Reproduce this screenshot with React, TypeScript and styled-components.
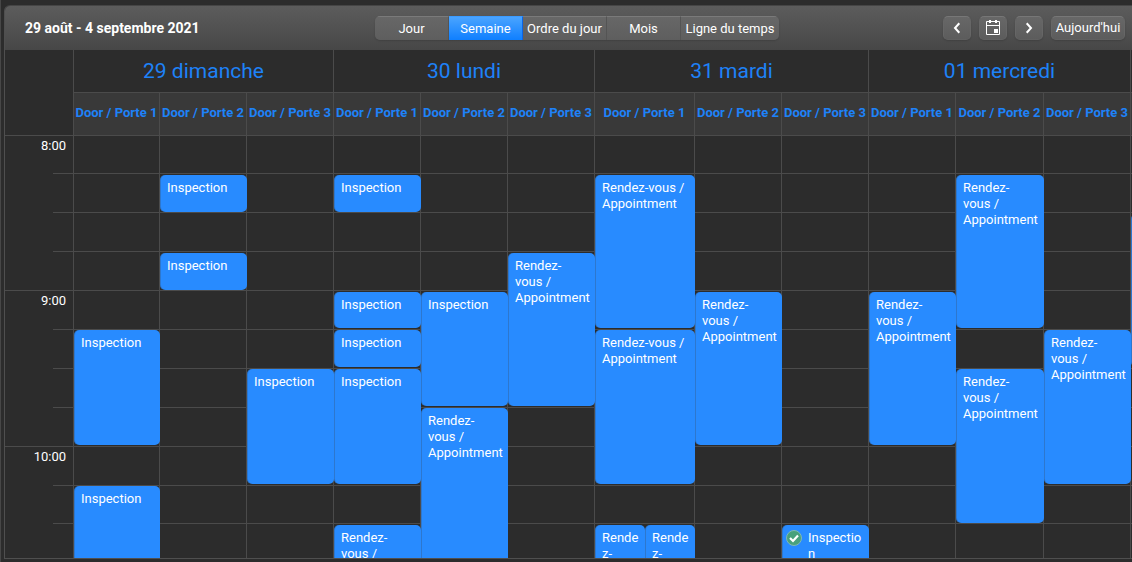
import React from "react";
import styled, { createGlobalStyle } from "styled-components";

const GlobalStyle = createGlobalStyle`
  * { box-sizing: border-box; }
  html, body { margin: 0; background: #2c2c2c; }
  body {
    font-family: Roboto, "Liberation Sans", sans-serif;
    font-size: 13px;
    color: #fff;
    overflow: hidden;
  }
  button { font: inherit; color: inherit; }
`;

const line = "#4b4b4b";
const accent = "#1e82f8";

/* Time gutter, twelve door columns, and the first pixels of the next day. */
const columns =
  "68px 86fr repeat(5, 87fr) 100fr repeat(3, 87fr) 88fr 87fr 2px";

const Page = styled.main`
  border-left: 1px solid #474747;
  padding: 5px 0 3px 3px;
  overflow: hidden;
`;

const Scheduler = styled.section`
  border: 1px solid #4f4f4f;
  border-right: 0;
  border-top-color: #454545;
  border-top-left-radius: 6px;
  overflow: hidden;
`;

const Toolbar = styled.header`
  display: grid;
  grid-template-columns: 350fr auto 346fr;
  align-items: center;
  height: 44px;
  padding: 0 7px 0 20px;
  background: linear-gradient(#5c5c5c, #474747);
`;

const Title = styled.h1`
  margin: 0;
  font-size: 14px;
  line-height: 20px;
  font-weight: 700;
  white-space: nowrap;
`;

const Views = styled.div`
  display: flex;
  height: 24px;
  border-radius: 5px;
  overflow: hidden;
  box-shadow: 0 1px 2px rgba(0, 0, 0, 0.15);
`;

const ViewButton = styled.button<{ $active?: boolean; $width: number }>`
  width: ${(p) => p.$width}px;
  padding: 0;
  border: 0;
  border-top: 1px solid ${(p) => (p.$active ? "#3b9bff" : "#7a7a7a")};
  border-right: 1px solid ${(p) => (p.$active ? "#0a66e8" : "#545454")};
  background: ${(p) =>
    p.$active
      ? "linear-gradient(#4aa4ff, #0f7fff)"
      : "linear-gradient(#676767, #5e5e5e)"};
  line-height: 22px;
  white-space: nowrap;
  &:last-child { border-right: 0; }
`;

const Nav = styled.nav`
  display: flex;
  justify-content: flex-end;
  gap: 8px;
`;

const NavButton = styled.button<{ $width?: number }>`
  display: flex;
  align-items: center;
  justify-content: center;
  width: ${(p) => p.$width ?? 28}px;
  height: 24px;
  padding: 0;
  border: 1px solid #666;
  border-top-color: #777;
  border-bottom-color: #606060;
  border-radius: 5px;
  background: linear-gradient(#676767, #5c5c5c);
  box-shadow: 0 1px 2px rgba(0, 0, 0, 0.15);
  line-height: 22px;
  white-space: nowrap;
`;

const Header = styled.div`
  display: grid;
  grid-template-columns: ${columns};
  grid-template-rows: 42px 43px;
`;

const Corner = styled.div`
  grid-row: 1 / 3;
`;

const DayName = styled.h2<{ $span: number }>`
  grid-column: span ${(p) => p.$span};
  margin: 0;
  border-left: 1px solid ${line};
  color: ${accent};
  font-size: 21px;
  font-weight: 400;
  line-height: 42px;
  text-align: center;
`;

const DoorName = styled.div`
  border-left: 1px solid ${line};
  border-top: 1px solid ${line};
  background: #393939;
  color: ${accent};
  font-weight: 700;
  line-height: 40px;
  text-align: center;
  white-space: nowrap;
  overflow: hidden;
`;

const Body = styled.div`
  display: grid;
  grid-template-columns: minmax(0, 1fr);
`;

const Layer = styled.div`
  grid-area: 1 / 1;
  display: grid;
  grid-template-columns: ${columns};
`;

const Slots = styled(Layer)`
  grid-template-rows: 38px repeat(8, 39px) 38px 35px;
`;

const Events = styled(Layer)`
  grid-template-rows: repeat(4, 39px) 38px repeat(5, 39px) 34px;
`;

const Time = styled.div<{ $hour: boolean }>`
  margin-left: ${(p) => (p.$hour ? 0 : 48)}px;
  padding-right: 7px;
  border-top: 1px solid ${line};
  line-height: 20px;
  text-align: right;
`;

const Cell = styled.div`
  border-left: 1px solid ${line};
  border-top: 1px solid ${line};
`;

const Event = styled.article<{
  $col: number;
  $from: number;
  $to: number;
  $cut?: boolean;
}>`
  grid-column: ${(p) => p.$col + 1};
  grid-row: ${(p) => p.$from} / ${(p) => p.$to};
  display: flex;
  gap: 6px;
  min-width: 0;
  min-height: 0;
  margin: 1px -1px ${(p) => (p.$cut ? 0 : 1)}px 1px;
  padding: 5px 4px 0 7px;
  border-radius: ${(p) => (p.$cut ? "5px 5px 0 0" : "5px")};
  background: #288bff;
  box-shadow: inset 1px 0 0 rgba(60, 60, 60, 0.25);
  line-height: 16px;
  overflow: hidden;
  overflow-wrap: anywhere;
`;

const Pair = styled.div<{ $col: number; $from: number; $to: number }>`
  grid-column: ${(p) => p.$col + 1};
  grid-row: ${(p) => p.$from} / ${(p) => p.$to};
  display: grid;
  grid-template-columns: 1fr 1fr;
  min-width: 0;
  min-height: 0;
`;

const HalfEvent = styled(Event)`
  grid-area: auto;
`;

const StatusIcon = styled.svg`
  flex: none;
  width: 16px;
  height: 16px;
  margin-left: -3px;
`;

const views = [
  { name: "Jour", width: 74 },
  { name: "Semaine", width: 74 },
  { name: "Ordre du jour", width: 84 },
  { name: "Mois", width: 74 },
  { name: "Ligne du temps", width: 98 },
];

const days = ["29 dimanche", "30 lundi", "31 mardi", "01 mercredi"];
const hours = ["8:00", "9:00", "10:00"];
const INS = "Inspection";
const RDV = "Rendez-vous\u00a0/ Appointment";

/* Rows are quarter hours counted from 8:00 = 1; row 12 is the visible end. */
const events = [
  { col: 1, from: 6, to: 9, text: INS },
  { col: 1, from: 10, to: 12, text: INS },
  { col: 2, from: 2, to: 3, text: INS },
  { col: 2, from: 4, to: 5, text: INS },
  { col: 3, from: 7, to: 10, text: INS },
  { col: 4, from: 2, to: 3, text: INS },
  { col: 4, from: 5, to: 6, text: INS },
  { col: 4, from: 6, to: 7, text: INS },
  { col: 4, from: 7, to: 10, text: INS },
  { col: 4, from: 11, to: 12, text: RDV },
  { col: 5, from: 5, to: 8, text: INS },
  { col: 5, from: 8, to: 12, text: RDV },
  { col: 6, from: 4, to: 8, text: RDV },
  { col: 7, from: 2, to: 6, text: RDV },
  { col: 7, from: 6, to: 10, text: RDV },
  { col: 8, from: 5, to: 9, text: RDV },
  { col: 9, from: 11, to: 12, text: INS, done: true },
  { col: 10, from: 5, to: 9, text: RDV },
  { col: 11, from: 2, to: 6, text: RDV },
  { col: 11, from: 7, to: 11, text: RDV },
  { col: 12, from: 6, to: 10, text: RDV },
  { col: 13, from: 3, to: 7, text: "" },
];

const Chevron = ({ d }: { d: string }) => (
  <svg width="14" height="14" viewBox="0 0 14 14" fill="none" stroke="#fff" strokeWidth="2" aria-hidden="true">
    <path d={d} />
  </svg>
);

export default function App() {
  return (
    <Page>
      <GlobalStyle />
      <Scheduler>
        <Toolbar>
          <Title>29 août - 4 septembre 2021</Title>
          <Views role="group" aria-label="Affichage">
            {views.map((v) => (
              <ViewButton
                key={v.name}
                type="button"
                $width={v.width}
                $active={v.name === "Semaine"}
                aria-pressed={v.name === "Semaine"}
              >
                {v.name}
              </ViewButton>
            ))}
          </Views>
          <Nav aria-label="Période">
            <NavButton type="button" aria-label="Précédent">
              <Chevron d="M9.3 2.3 L5 7 L9.3 11.7" />
            </NavButton>
            <NavButton type="button" aria-label="Choisir une date">
              <svg width="16" height="16" viewBox="0 0 16 16" fill="none" aria-hidden="true">
                <path d="M1.5 1.5 H14.5 V14.5 H1.5 Z M1 5.5 H15" stroke="#fff" />
                <path d="M4 0 H6 V3 H4 Z M10 0 H12 V3 H10 Z M9 9 H13 V13 H9 Z" fill="#fff" />
              </svg>
            </NavButton>
            <NavButton type="button" aria-label="Suivant">
              <Chevron d="M4.7 2.3 L9 7 L4.7 11.7" />
            </NavButton>
            <NavButton type="button" $width={74}>Aujourd'hui</NavButton>
          </Nav>
        </Toolbar>

        <Header>
          <Corner />
          {days.map((d) => (
            <DayName key={d} $span={3}>{d}</DayName>
          ))}
          <DayName as="div" $span={1} />
          {days.map((d) =>
            [1, 2, 3].map((n) => (
              <DoorName key={d + n}>Door / Porte {n}</DoorName>
            ))
          )}
          <DoorName />
        </Header>

        <Body>
          <Slots>
            {Array.from({ length: 11 }, (_, row) => (
              <React.Fragment key={row}>
                <Time $hour={row % 4 === 0}>{row % 4 === 0 ? hours[row / 4] : null}</Time>
                {Array.from({ length: 13 }, (_, col) => (
                  <Cell key={col} />
                ))}
              </React.Fragment>
            ))}
          </Slots>
          <Events>
            {events.map((e) => (
              <Event
                key={`${e.col}-${e.from}`}
                $col={e.col}
                $from={e.from}
                $to={e.to}
                $cut={e.to === 12}
              >
                {e.done && (
                  <StatusIcon viewBox="0 0 16 16" role="img" aria-label="Terminé">
                    <circle cx="8" cy="8" r="7.5" fill="#48a17c" stroke="#7fb9b4" />
                    <path d="M4 8 L7 11 L12 5.5" fill="none" stroke="#fff" strokeWidth="2.2" />
                  </StatusIcon>
                )}
                <span>{e.text}</span>
              </Event>
            ))}
            <Pair $col={7} $from={11} $to={12}>
              <HalfEvent $col={7} $from={11} $to={12} $cut><span>{RDV}</span></HalfEvent>
              <HalfEvent $col={7} $from={11} $to={12} $cut><span>{RDV}</span></HalfEvent>
            </Pair>
          </Events>
        </Body>
      </Scheduler>
    </Page>
  );
}
